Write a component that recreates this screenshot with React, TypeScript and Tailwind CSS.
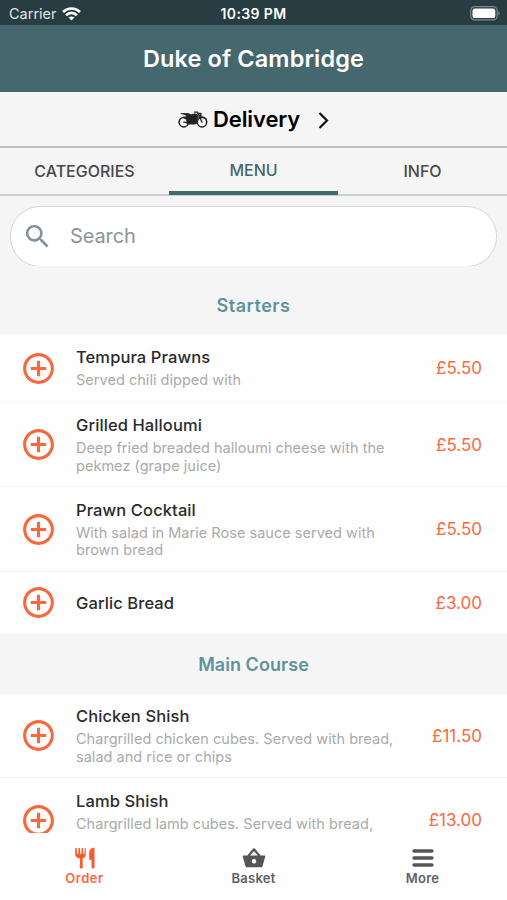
import { MdAddCircleOutline, MdSearch } from "react-icons/md";

type Dish = { name: string; lines: string[]; price: string; row: string; text?: string };

const starters: Dish[] = [
  { name: "Tempura Prawns", lines: ["Served chili dipped with"], price: "£5.50", row: "h-[69px] border-[#fafafa]", text: "mb-px" },
  { name: "Grilled Halloumi", lines: ["Deep fried breaded halloumi cheese with the", "pekmez (grape juice)"], price: "£5.50", row: "h-[84px] border-[#f9f9f9]", text: "mb-px" },
  { name: "Prawn Cocktail", lines: ["With salad in Marie Rose sauce served with", "brown bread"], price: "£5.50", row: "h-[85px] border-[#f2f2f2]", text: "mb-px" },
  { name: "Garlic Bread", lines: [], price: "£3.00", row: "h-[62px] pb-px" },
];

const mains: Dish[] = [
  { name: "Chicken Shish", lines: ["Chargrilled chicken cubes. Served with bread,", "salad and rice or chips"], price: "£11.50", row: "h-[84px] border-[#f2f2f2]", text: "mb-px" },
  { name: "Lamb Shish", lines: ["Chargrilled lamb cubes. Served with bread,"], price: "£13.00", row: "h-[84px]", text: "mb-px h-[35px]" },
];

function DishRow({ dish }: { dish: Dish }) {
  return (
    <div className={`flex shrink-0 items-center border-b bg-[#fefefe] pl-5 pr-[25px] last:border-b-0 ${dish.row}`}>
      <MdAddCircleOutline className="size-[37px] shrink-0 text-[#f9683c]" />
      <div className="ml-[19px] flex-1 whitespace-nowrap">
        <div className="text-[16.5px] font-medium leading-[22px] tracking-[0.1px] text-[#2b2b2b]">{dish.name}</div>
        {dish.lines.length > 0 && (
          <div className={`mt-[3px] text-[14.5px] leading-[17.5px] tracking-[0.03px] text-[#aaa] ${dish.text}`}>
            {dish.lines.map((line) => (
              <div key={line}>{line}</div>
            ))}
          </div>
        )}
      </div>
      <div className="text-[17px] leading-5 text-[#f9693f]">{dish.price}</div>
    </div>
  );
}

function SectionTitle({ children, spacing }: { children: string; spacing: string }) {
  return <h2 className={`flex h-[60px] shrink-0 items-center justify-center text-[18px] font-semibold text-[#5f929c] ${spacing}`}>{children}</h2>;
}

function Wifi() {
  return (
    <svg width="19" height="14" viewBox="0 0 19 14" fill="none" stroke="#fff" strokeWidth="2.7">
      <path d="M1 5C5.8.3 13.2.3 18 5" />
      <path d="M4.1 8.2c3.100-3 7.700-3 10.800 0" />
      <path d="M9.500 13.600 6.600 10.500c1.700-1.500 4.100-1.500 5.800 0z" fill="#fff" stroke="none" />
    </svg>
  );
}

function Battery() {
  return (
    <svg width="31" height="15" viewBox="0 0 31 15">
      <rect x=".7" y=".7" width="26.4" height="13.2" rx="3.8" fill="none" stroke="#7b898c" strokeWidth="1.2" />
      <rect x="2.5" y="2.5" width="22.8" height="9.6" rx="2.2" fill="#fff" />
      <path d="M28.400 5.100c1.700.8 1.700 3.600 0 4.400z" fill="#7b898c" />
    </svg>
  );
}

function Motorbike() {
  return (
    <svg className="mt-[2px]" width="30" height="18" viewBox="0 0 30 18" fill="none" stroke="#222" strokeLinecap="round" strokeLinejoin="round">
      <circle cx="5.8" cy="11.2" r="4.7" strokeWidth="1.5" />
      <circle cx="24" cy="11.2" r="4.7" strokeWidth="1.5" />
      <path d="M3.200 2.500h7l3 1.300 3.200-1 3 1 .4 2.200-1.500 6.700-9 .5L8.500 8.500 5 6.300l3.500-.6-.5-1.700z" fill="#222" strokeWidth=".8" />
      <path d="M5.800 11.200l10 1.600M16.500 1.100h3L24 11.200M19.500 2.600l3.400-.3v2.200h-2M20.500 6c2.800-.9 5.600-.2 7.600 1.900" strokeWidth="1.300" />
    </svg>
  );
}

function Cutlery() {
  return (
    <svg width="22" height="22" viewBox="0 0 22 22" fill="#fb5a30">
      <path d="M1.200 1h1.500l.4 6h1.100l.3-6h1.400l.3 6h1.100l.3-6h1.400l.3 6h1.100l.4-6h.9l.1 6c0 2.600-1.200 4-3.300 4.600l.3 8.400c0 1-.7 1.500-1.500 1.500s-1.500-.5-1.500-1.500l.3-8.400C2.800 11 1.200 9.600 1.200 7z" />
      <path d="M20.500.8v19.200c0 .9-.6 1.500-1.500 1.500s-1.500-.6-1.500-1.500v-7.300h-2.300V5.400c0-2.700 1.900-4.600 5.300-4.600z" />
    </svg>
  );
}

function Basket() {
  return (
    <svg width="24" height="20" viewBox="0 0 24 20">
      <path d="M6.200 8.300 12 1.300l5.800 7" fill="none" stroke="#555" strokeWidth="2.200" strokeLinejoin="round" />
      <path fillRule="evenodd" d="M1.400 7.400h21.200c.5 0 .8.5.7.9l-2.700 9.600c-.2.8-.8 1.300-1.600 1.300H5c-.8 0-1.400-.5-1.600-1.300L.7 8.300c-.1-.4.2-.9.7-.9zM12 11a2.300 2.300 0 1 0 0 4.600 2.300 2.300 0 0 0 0-4.600z" fill="#555" />
    </svg>
  );
}

function Bars() {
  return (
    <svg width="22" height="18" viewBox="0 0 22 18" fill="none" stroke="#555" strokeWidth="3.4" strokeLinecap="round">
      <path d="M2 2h18M2 9h18M2 16h18" />
    </svg>
  );
}

export default function App() {
  return (
    <div className="flex h-[900px] w-[507px] flex-col overflow-hidden bg-[#f5f5f5] font-['Inter',sans-serif]">
      <div className="grid h-[25px] shrink-0 grid-cols-3 items-center bg-[#283d41] text-white">
        <div className="flex items-center gap-[5px] pl-[9px] pt-[2px] text-[14.5px] text-[#dfe4e5]">
          Carrier
          <Wifi />
        </div>
        <div className="pt-[2px] text-center text-[14px] font-semibold tracking-[0.4px]">10:39 PM</div>
        <div className="flex justify-end pr-[6px] pt-[1px]">
          <Battery />
        </div>
      </div>
      <header className="flex h-[67px] shrink-0 items-center justify-center bg-[#45676e]">
        <h1 className="text-[23.5px] font-semibold tracking-[0.12px] text-white">Duke of Cambridge</h1>
      </header>
      <button className="flex h-[56px] shrink-0 items-center border-b-2 border-[#bcc0c0] pl-[178px]">
        <Motorbike />
        <span className="ml-[5px] text-[22px] font-semibold tracking-[-0.1px] text-black">Delivery</span>
        <svg className="ml-[18px] mt-[2px]" width="11" height="17" viewBox="0 0 11 17" fill="none" stroke="#111" strokeWidth="2.2">
          <path d="m1.500 1 7.500 7.500-7.500 7.500" />
        </svg>
      </button>
      <nav className="grid h-[48px] shrink-0 grid-cols-3 border-b-2 border-[#c5d1d3] text-center text-[16px] font-medium text-[#484848]">
        <div className="pt-[11px]">CATEGORIES</div>
        <div className="-mb-px border-b-4 border-[#45676e] pt-[10px] text-[#45676e]">MENU</div>
        <div className="pt-[11px]">INFO</div>
      </nav>
      <main className="flex min-h-0 flex-1 flex-col overflow-hidden">
        <div className="mx-[10px] mt-[10px] h-[60px] shrink-0 overflow-hidden">
          <div className="flex h-[61px] items-center rounded-[30px] border border-[#d3d5d6] bg-white pb-px pl-[11px] text-[20px] text-[#8b959c]">
            <MdSearch className="size-[31px] text-[#84919a]" />
            <span className="ml-[17px] tracking-[-0.1px]">Search</span>
          </div>
        </div>
        <div className="h-[8px] shrink-0" />
        <SectionTitle spacing="pt-[2px] tracking-[0.5px]">Starters</SectionTitle>
        <section className="flex shrink-0 flex-col">
          {starters.map((dish) => (
            <DishRow key={dish.name} dish={dish} />
          ))}
        </section>
        <SectionTitle spacing="tracking-[0.05px]">Main Course</SectionTitle>
        <section className="flex shrink-0 flex-col">
          {mains.map((dish) => (
            <DishRow key={dish.name} dish={dish} />
          ))}
        </section>
      </main>
      <footer className="grid h-[67px] shrink-0 grid-cols-3 bg-[#fefefe] text-[13px] font-semibold tracking-[0.25px] text-[#606060]">
        <div className="flex flex-col items-center pt-[14px] text-[#fb6740]">
          <Cutlery />
          <span className="-mt-px leading-5 tracking-[0.5px]">Order</span>
        </div>
        <div className="flex flex-col items-center pt-[15px]">
          <Basket />
          <span className="leading-5">Basket</span>
        </div>
        <div className="flex flex-col items-center pt-[16px]">
          <Bars />
          <span className="mt-px leading-5">More</span>
        </div>
      </footer>
    </div>
  );
}
